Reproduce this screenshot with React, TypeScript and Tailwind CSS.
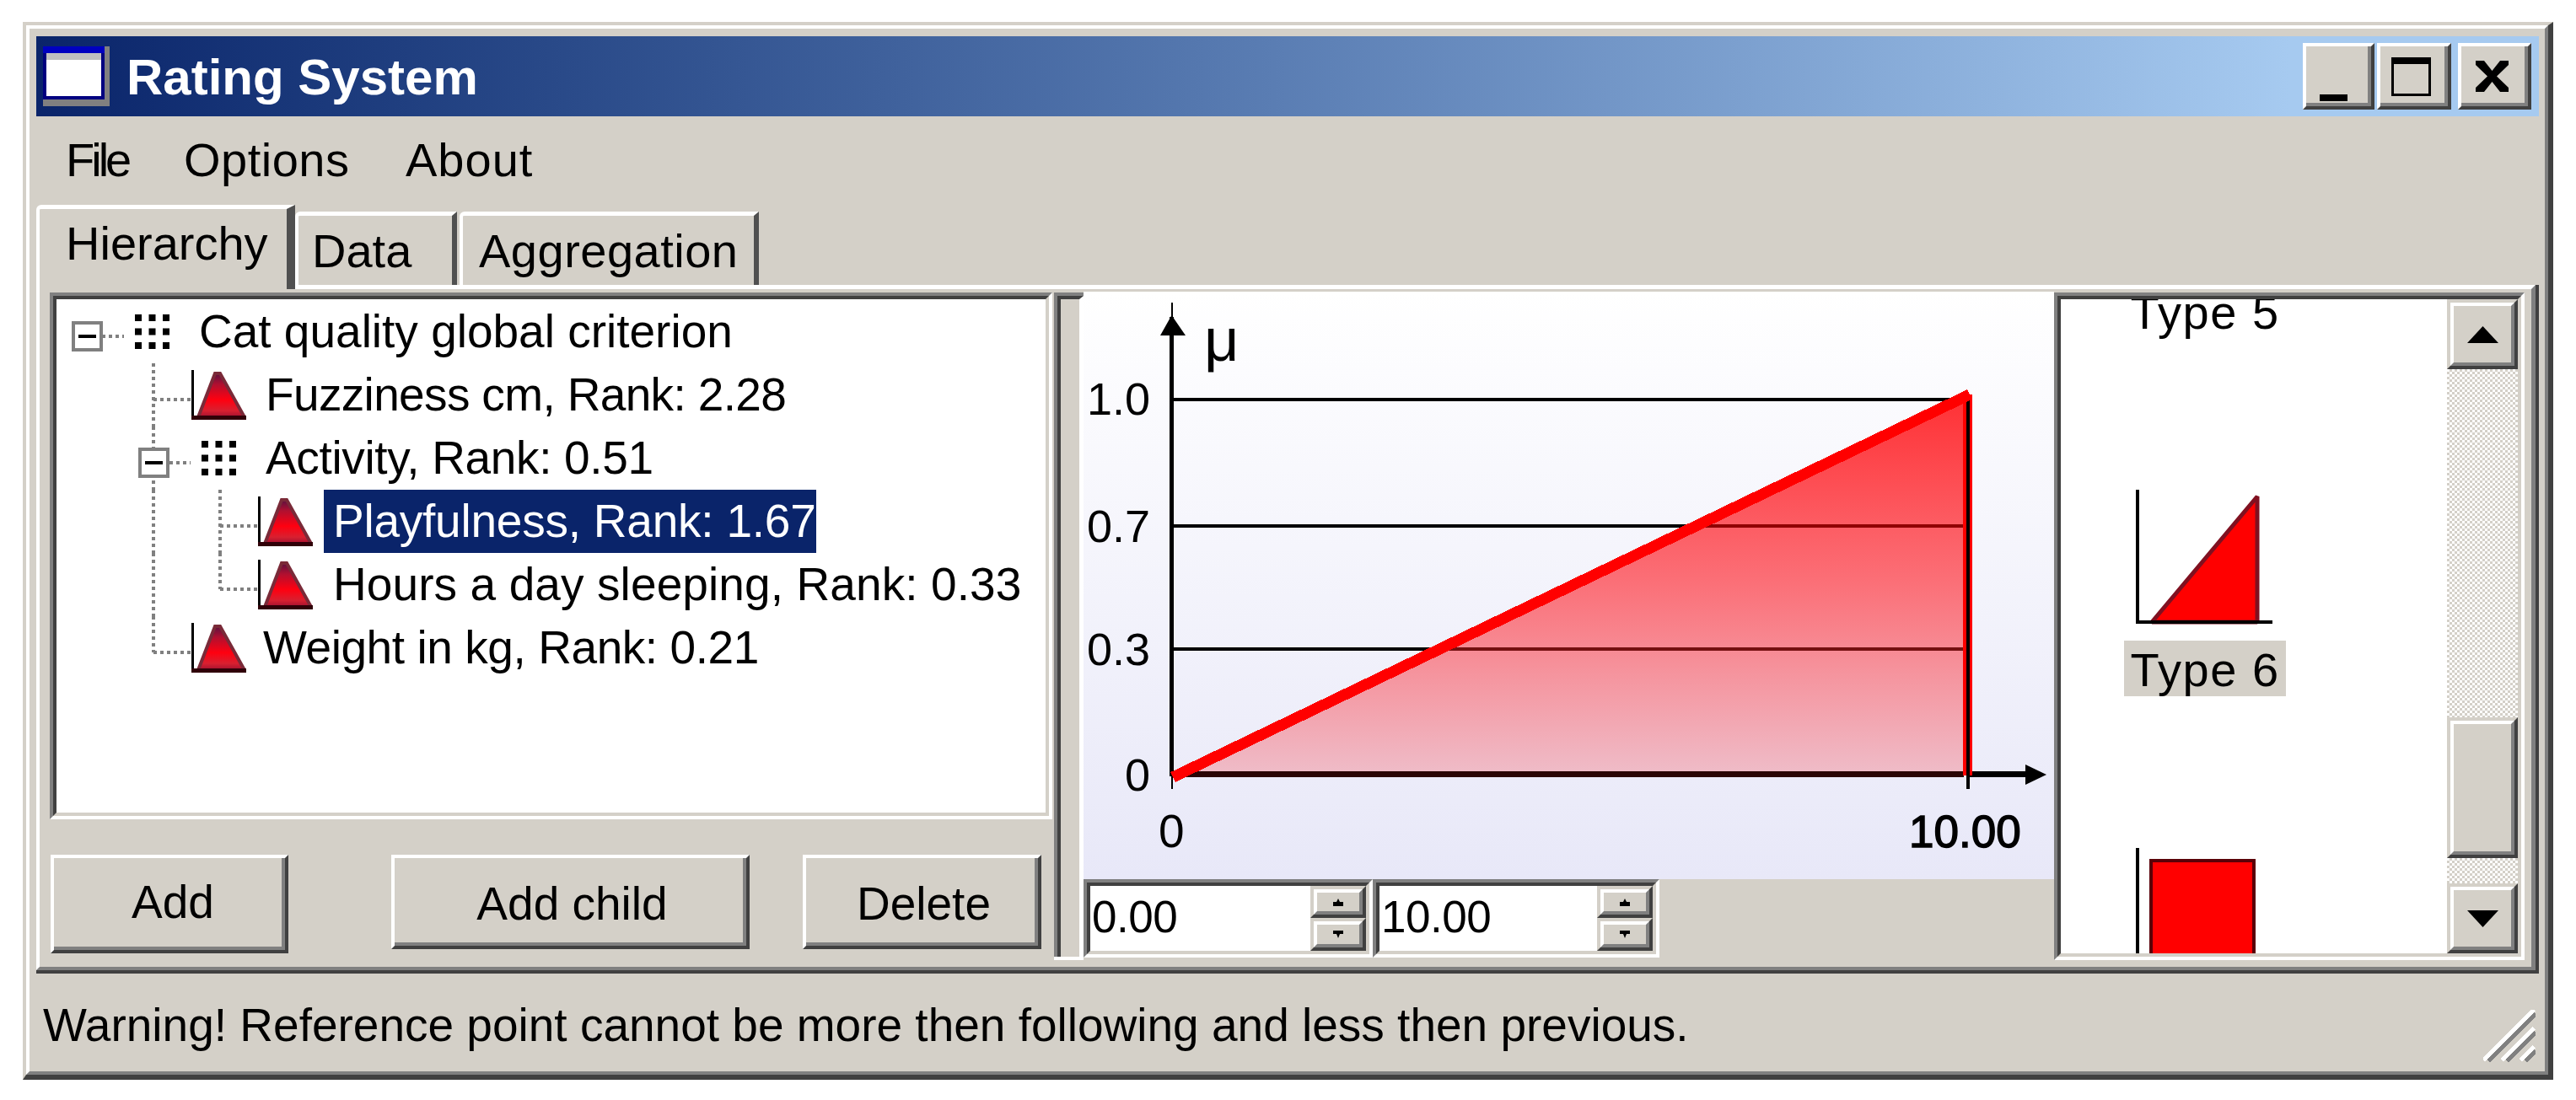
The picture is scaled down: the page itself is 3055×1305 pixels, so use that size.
import type { ReactNode } from 'react';

const raisedFlat = 'border-l-4 border-t-4 border-r-4 border-b-4 border-l-white border-t-white border-r-[#404040] border-b-[#404040]';
const raisedScroll = 'border-l-4 border-t-4 border-r-4 border-b-4 border-l-[#d4d0c8] border-t-[#d4d0c8] border-r-[#404040] border-b-[#404040]';

function WinButton({ className, children }: { className: string; children?: ReactNode }) {
  return (
    <div className={`${raisedFlat} ${className}`}>
      <div className="flex h-full w-full items-center justify-center border-r-4 border-b-4 border-r-[#808080] border-b-[#808080] bg-[#d4d0c8]">
        {children}
      </div>
    </div>
  );
}

function ScrollButton({ className, children }: { className: string; children?: ReactNode }) {
  return (
    <div className={`${raisedScroll} ${className}`}>
      <div className="flex h-full w-full items-center justify-center border-l-4 border-t-4 border-r-4 border-b-4 border-l-white border-t-white border-r-[#808080] border-b-[#808080] bg-[#d4d0c8]">
        {children}
      </div>
    </div>
  );
}

function Sunken({ className, innerClassName, children }: { className: string; innerClassName?: string; children?: ReactNode }) {
  return (
    <div className={`border-l-4 border-t-4 border-r-4 border-b-4 border-l-[#808080] border-t-[#808080] border-r-white border-b-white ${className}`}>
      <div className={`h-full w-full border-l-4 border-t-4 border-r-4 border-b-4 border-l-[#404040] border-t-[#404040] border-r-[#d4d0c8] border-b-[#d4d0c8] bg-white ${innerClassName ?? ''}`}>
        {children}
      </div>
    </div>
  );
}

function GridIcon() {
  return (
    <svg width="41" height="41" viewBox="0 0 41 41" className="shrink-0">
      {[0, 16.5, 33].map((y) =>
        [0, 16.5, 33].map((x) => <rect key={`${x}-${y}`} x={x} y={y} width="8" height="8" fill="#000" />)
      )}
    </svg>
  );
}

function TriangleIcon() {
  return (
    <svg width="65" height="60" viewBox="0 0 65 60" className="shrink-0">
      <defs>
        <linearGradient id="tri" x1="0" y1="0" x2="0" y2="1">
          <stop offset="0" stopColor="#5a1040" />
          <stop offset="0.25" stopColor="#b01030" />
          <stop offset="0.6" stopColor="#ff0010" />
          <stop offset="0.85" stopColor="#d82030" />
          <stop offset="1" stopColor="#a01030" />
        </linearGradient>
      </defs>
      <polygon points="28,4 34,4 63,56 8,56" fill="url(#tri)" stroke="#7a2a38" strokeWidth="4" />
      <rect x="0" y="0" width="3" height="59" fill="#000" />
      <rect x="0" y="54" width="65" height="5" fill="#300008" />
    </svg>
  );
}

const dotted = { stroke: '#808080', strokeWidth: 4, strokeDasharray: '4 4', fill: 'none' };

function ExpandBox({ x }: { x: number }) {
  return (
    <g>
      <rect x={x + 2} y={27} width={33} height={32} fill="#fff" stroke="#808080" strokeWidth="4" />
      <rect x={x + 8} y={41} width={21} height={4} fill="#000" />
    </g>
  );
}

function TreeRow({ gutter, width, icon, children }: { gutter: ReactNode; width: number; icon: ReactNode; children: ReactNode }) {
  return (
    <div className="flex h-[75px] items-center">
      <svg width={width} height="75" viewBox={`0 0 ${width} 75`} className="shrink-0">
        {gutter}
      </svg>
      {icon}
      {children}
    </div>
  );
}

function TreePanel() {
  return (
    <div className="pt-px text-[55px] leading-[75px] whitespace-nowrap text-black">
      <TreeRow
        width={93}
        icon={<GridIcon />}
        gutter={
          <>
            <ExpandBox x={18} />
            <line x1="54" y1="43" x2="80" y2="43" {...dotted} />
          </>
        }
      >
        <span className="ml-[35px]">Cat quality global criterion</span>
      </TreeRow>
      <TreeRow
        width={160}
        icon={<TriangleIcon />}
        gutter={
          <>
            <line x1="115" y1="0" x2="115" y2="75" {...dotted} />
            <line x1="115" y1="43" x2="160" y2="43" {...dotted} />
          </>
        }
      >
        <span className="ml-[23px] tracking-[-0.65px]">Fuzziness cm, Rank: 2.28</span>
      </TreeRow>
      <TreeRow
        width={172}
        icon={<GridIcon />}
        gutter={
          <>
            <line x1="115" y1="0" x2="115" y2="75" {...dotted} />
            <ExpandBox x={97} />
            <line x1="134" y1="43" x2="159" y2="43" {...dotted} />
          </>
        }
      >
        <span className="ml-[35px] tracking-[-0.35px]">Activity, Rank: 0.51</span>
      </TreeRow>
      <TreeRow
        width={239}
        icon={<TriangleIcon />}
        gutter={
          <>
            <line x1="115" y1="0" x2="115" y2="75" {...dotted} />
            <line x1="194" y1="0" x2="194" y2="75" {...dotted} />
            <line x1="194" y1="43" x2="239" y2="43" {...dotted} />
          </>
        }
      >
        <span className="ml-[13px] -mt-px w-[584px] bg-[#0a246a] pl-[11px] tracking-[-0.23px] text-white">Playfulness, Rank: 1.67</span>
      </TreeRow>
      <TreeRow
        width={239}
        icon={<TriangleIcon />}
        gutter={
          <>
            <line x1="115" y1="0" x2="115" y2="75" {...dotted} />
            <line x1="194" y1="0" x2="194" y2="43" {...dotted} />
            <line x1="194" y1="43" x2="239" y2="43" {...dotted} />
          </>
        }
      >
        <span className="ml-[24px] tracking-[0.1px]">Hours a day sleeping, Rank: 0.33</span>
      </TreeRow>
      <TreeRow
        width={160}
        icon={<TriangleIcon />}
        gutter={
          <>
            <line x1="115" y1="0" x2="115" y2="43" {...dotted} />
            <line x1="115" y1="43" x2="160" y2="43" {...dotted} />
          </>
        }
      >
        <span className="ml-[20px] tracking-[-0.43px]">Weight in kg, Rank: 0.21</span>
      </TreeRow>
    </div>
  );
}

function Chart() {
  return (
    <div className="h-[697px] w-[1151px] bg-linear-to-b from-white to-[#e8e8f8]">
      <svg width="1151" height="697" viewBox="0 0 1151 697" className="block">
        <defs>
          <linearGradient id="area" gradientUnits="userSpaceOnUse" x1="0" y1="122" x2="0" y2="572">
            <stop offset="0" stopColor="#ff3034" />
            <stop offset="0.5" stopColor="#fb7078" />
            <stop offset="1" stopColor="#efbcc8" />
          </linearGradient>
        </defs>
        <rect x="104" y="126" width="944" height="4" fill="#000" />
        <rect x="104" y="276" width="944" height="4" fill="#000" />
        <rect x="104" y="422" width="944" height="4" fill="#000" />
        <polygon points="104,572 1048,122 1048,572" fill="url(#area)" />
        <rect x="720" y="276" width="324" height="4" fill="#900000" />
        <rect x="414" y="422" width="630" height="4" fill="#741010" />

        <rect x="102" y="30" width="5" height="545" fill="#000" />
        <rect x="104" y="13" width="2" height="20" fill="#000" />
        <polygon points="104.500,28 91,52 121,52" fill="#000" />
        <rect x="104" y="569" width="940" height="7" fill="#2a0505" />
        <rect x="1050" y="569" width="70" height="7" fill="#000" />
        <polygon points="1142,573 1117,561 1117,585" fill="#000" />
        <rect x="104" y="570" width="2" height="20" fill="#000" />
        <rect x="1047" y="570" width="2" height="20" fill="#000" />

        <rect x="1043" y="122" width="11" height="452" fill="#ff0000" />
        <rect x="1047" y="126" width="4" height="464" fill="#000" />
        <line x1="106" y1="576" x2="1051" y2="122" stroke="#ff0000" strokeWidth="13" shapeRendering="crispEdges" />

        <g fontSize="54" fill="#000" textAnchor="end">
          <text x="79" y="146">1.0</text>
          <text x="79" y="297">0.7</text>
          <text x="79" y="443">0.3</text>
          <text x="79" y="592">0</text>
        </g>
        <text x="143" y="82" fontSize="72" fill="#000">μ</text>
        <text x="89" y="659" fontSize="55" fill="#000">0</text>
        <text x="979" y="659" fontSize="53" fill="#000" stroke="#000" strokeWidth="1.5">10.00</text>
      </svg>
    </div>
  );
}

function SpinEdit({ value, className }: { value: string; className: string }) {
  return (
    <Sunken className={`h-[93px] ${className}`} innerClassName="flex">
      <span className="flex-1 pl-[2px] text-[53px] leading-[74px] tracking-[-0.5px]">{value}</span>
      <div className="flex w-[66px] flex-col">
        <ScrollButton className="h-[38px]">
          <svg width="12" height="9" viewBox="0 0 12 9">
            <polygon points="6,0 8,4 12,4 12,9 0,9 0,4 4,4" fill="#000" />
          </svg>
        </ScrollButton>
        <ScrollButton className="flex-1">
          <svg width="12" height="9" viewBox="0 0 12 9">
            <polygon points="0,0 12,0 12,4 8,4 6,9 4,4 0,4" fill="#000" />
          </svg>
        </ScrollButton>
      </div>
    </Sunken>
  );
}

function TypeList() {
  return (
    <div className="w-[342px] flex flex-col items-center text-[56px] leading-[66px] tracking-[1.5px]">
      <span className="-mt-[17px] h-[66px]">Type 5</span>
      <svg width="165" height="160" viewBox="0 0 165 160" className="mt-[177px] shrink-0">
        <polygon points="19,157 144,8 144,157" fill="#ff0000" stroke="#801020" strokeWidth="5" strokeLinejoin="bevel" />
        <rect x="0" y="0" width="4" height="159" fill="#000" />
        <rect x="0" y="155" width="162" height="4" fill="#000" />
      </svg>
      <span className="mt-[19px] h-[66px] w-[192px] shrink-0 bg-[#d4d0c8] pt-[2px] text-center">Type 6</span>
      <svg width="165" height="126" viewBox="0 0 165 126" className="mt-[180px] shrink-0">
        <rect x="0" y="0" width="4" height="126" fill="#000" />
        <rect x="18" y="15" width="122" height="120" fill="#ff0000" stroke="#5a0008" strokeWidth="4" />
      </svg>
    </div>
  );
}

function Scrollbar() {
  const track = 'bg-[repeating-conic-gradient(#d4d0c8_0_25%,#ffffff_0_50%)] bg-[length:6px_6px]';
  return (
    <div className="flex w-[84px] flex-col">
      <ScrollButton className="h-[83px]">
        <svg width="37" height="20" viewBox="0 0 37 20">
          <polygon points="18.500,0 37,20 0,20" fill="#000" />
        </svg>
      </ScrollButton>
      <div className={`h-[413px] ${track}`} />
      <ScrollButton className="h-[167px]" />
      <div className={`h-[30px] ${track}`} />
      <ScrollButton className="h-[83px]">
        <svg width="37" height="20" viewBox="0 0 37 20">
          <polygon points="0,0 37,0 18.500,20" fill="#000" />
        </svg>
      </ScrollButton>
    </div>
  );
}

export default function App() {
  return (
    <div className="h-[1305px] w-[3055px] overflow-hidden bg-white pl-[27px] pt-[26px] font-['Liberation_Sans',Arial,sans-serif] text-black">
      <div className="h-[1255px] w-[3001px] border-l-4 border-t-4 border-r-[6px] border-b-[6px] border-l-[#d4d0c8] border-t-[#d4d0c8] border-r-[#404040] border-b-[#404040] bg-[#d4d0c8]">
        <div className="flex h-full flex-col border-l-4 border-t-4 border-r-4 border-b-4 border-l-white border-t-white border-r-[#808080] border-b-[#808080]">
          <div className="flex flex-1 flex-col pl-2 pr-[7px] pt-[9px]">
            {/* title bar */}
            <div className="flex h-[95px] shrink-0 items-start bg-linear-to-r from-[#0a246a] to-[#a6caf0] to-90%">
              <div className="ml-2 mt-3 h-[71px] w-[79px] shrink-0 border-r-[6px] border-b-[8px] border-r-[#808080] border-b-[#808080]">
                <div className="h-full border-4 border-t-0 border-[#000080] bg-white">
                  <div className="-mx-1 h-2 bg-[#0000c0]" />
                  <div className="h-2 bg-[#c0c0c0]" />
                </div>
              </div>
              <span className="ml-5 text-[60px] font-bold leading-[98px] text-white">Rating System</span>
              <div className="ml-auto mr-[9px] mt-2 flex">
                <WinButton className="h-[79px] w-[85px]">
                  <svg width="33" height="8" viewBox="0 0 33 8" className="mt-[54px] mr-[8px]">
                    <rect width="33" height="8" fill="#000" />
                  </svg>
                </WinButton>
                <WinButton className="ml-[3px] h-[79px] w-[88px]">
                  <svg width="47" height="46" viewBox="0 0 47 46" className="mt-[4px] mr-[4px]">
                    <path d="M1.500 2H45.500V44.500H1.500Z" fill="none" stroke="#000" strokeWidth="3" />
                    <rect width="47" height="8" fill="#000" />
                  </svg>
                </WinButton>
                <WinButton className="ml-2 h-[79px] w-[87px]">
                  <svg width="39" height="37" viewBox="0 0 39 37" className="mt-1 mr-[3px]">
                    <path d="M0 0H10L19.500 12L29 0H39V5L25 18.500L39 32V37H29L19.500 25L10 37H0V32L14 18.500L0 5Z" fill="#000" />
                  </svg>
                </WinButton>
              </div>
            </div>

            {/* menu */}
            <div className="flex h-[105px] shrink-0 items-center pb-[2px] pl-[35px] text-[56px] leading-[63px]">
              <span className="w-[140px] tracking-[-4px]">File</span>
              <span className="w-[263px] tracking-[0.5px]">Options</span>
              <span className="tracking-[1px]">About</span>
            </div>

            {/* tabs */}
            <div className="flex h-[95px] shrink-0 items-start text-[56px] leading-[63px]">
              <div className="relative z-10 h-[100px] w-[307px] rounded-tl-md border-l-4 border-t-[5px] border-r-[10px] border-l-white border-t-white border-r-[#505050] bg-[#d4d0c8] pl-[31px] pt-[9px]">
                Hierarchy
              </div>
              <div className="mt-2 h-[87px] w-[192px] rounded-tl-md border-l-4 border-t-[5px] border-r-[6px] border-l-white border-t-white border-r-[#505050] pl-4 pt-[10px]">
                Data
              </div>
              <div className="ml-[3px] mt-2 h-[87px] w-[355px] rounded-tl-md border-l-4 border-t-[5px] border-r-[6px] border-l-white border-t-white border-r-[#505050] pl-[19px] pt-[10px] whitespace-nowrap tracking-[0.5px]">
                Aggregation
              </div>
            </div>

            {/* page */}
            <div className="h-[817px] shrink-0 border-r-4 border-b-4 border-r-[#404040] border-b-[#404040]">
              <div className="flex h-full border-l-4 border-t-[5px] border-r-[5px] border-b-4 border-l-white border-t-white border-r-[#808080] border-b-[#808080] pl-3 pt-1">
                <div className="w-[1189px] shrink-0">
                  <Sunken className="h-[625px]">
                    <TreePanel />
                  </Sunken>
                  <div className="ml-px mt-[42px] flex items-start text-[55px]">
                    <WinButton className="h-[117px] w-[282px]">
                      <span className="pl-3">Add</span>
                    </WinButton>
                    <WinButton className="ml-[122px] h-[112px] w-[425px]">
                      <span className="pl-2 pt-2">Add child</span>
                    </WinButton>
                    <WinButton className="ml-[63px] h-[112px] w-[283px]">
                      <span className="pl-2 pt-2">Delete</span>
                    </WinButton>
                  </div>
                </div>

                {/* splitter */}
                <div className="ml-[2px] flex h-[792px] w-[35px] shrink-0 flex-col">
                  <div className="flex-1 border-l-4 border-t-4 border-l-[#808080] border-t-[#808080]">
                    <div className="h-full border-l-4 border-t-4 border-r-[5px] border-l-[#404040] border-t-[#404040] border-r-white" />
                  </div>
                  <div className="h-1 bg-white" />
                </div>

                <div className="-mt-px w-[1151px] shrink-0">
                  <Chart />
                  <div className="flex">
                    <SpinEdit value="0.00" className="w-[343px]" />
                    <SpinEdit value="10.00" className="w-[340px]" />
                  </div>
                </div>

                <Sunken className="h-[792px] w-[558px] shrink-0" innerClassName="flex">
                  <div className="flex-1 overflow-hidden">
                    <TypeList />
                  </div>
                  <Scrollbar />
                </Sunken>
              </div>
            </div>

            {/* status bar */}
            <div className="flex flex-1 items-start pl-2 pt-[30px] text-[55px] leading-[63px]">
              <span>Warning! Reference point cannot be more then following and less then previous.</span>
              <svg width="62" height="62" viewBox="0 0 62 62" className="ml-auto mr-1 mt-[13px] shrink-0" shapeRendering="crispEdges">
                <g fill="none" strokeWidth="5">
                  <path d="M0 60L60 0M22 60L60 22M44 60L60 44" stroke="#ffffff" />
                  <path d="M6 61L62 5M28 61L62 27M50 61L62 49" stroke="#808080" />
                </g>
              </svg>
            </div>
          </div>
        </div>
      </div>
    </div>
  );
}
